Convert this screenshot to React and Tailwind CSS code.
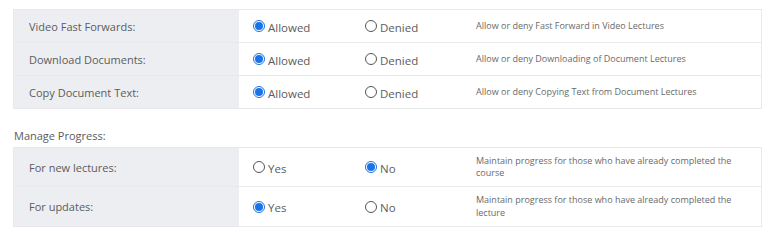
import React from "react";

const accessRows = [
  { label: "Video Fast Forwards:", value: "allowed", desc: "Allow or deny Fast Forward in Video Lectures" },
  { label: "Download Documents:", value: "allowed", desc: "Allow or deny Downloading of Document Lectures" },
  { label: "Copy Document Text:", value: "allowed", desc: "Allow or deny Copying Text from Document Lectures" },
];

const progressRows = [
  { label: "For new lectures:", value: "no", desc: "Maintain progress for those who have already completed the course" },
  { label: "For updates:", value: "yes", desc: "Maintain progress for those who have already completed the lecture" },
];

function Radio({ checked, label }) {
  return (
    <span className="flex items-center gap-[3px]">
      {checked ? (
        <span className="flex h-[12px] w-[12px] items-center justify-center rounded-full border border-[#1a73e8] bg-white">
          <span className="h-[8px] w-[8px] rounded-full bg-[#1a73e8]" />
        </span>
      ) : (
        <span className="h-[12px] w-[12px] rounded-full border border-[#555]" />
      )}
      <span className="mt-[2px] text-[11.5px] leading-[15px] text-[#5c5c5c]">{label}</span>
    </span>
  );
}

function SettingsTable({ rows, options, heights }) {
  return (
    <div className="ml-[13px] w-[749px] border-x border-t border-[#e8e9ed]">
      {rows.map((row, i) => (
        <div key={row.label} className={`flex border-b border-[#e8e9ed] ${heights[i]}`}>
          <div className="flex w-[225px] items-center bg-[#edeef2] pl-[15px] text-[11px] leading-[15px] text-[#5c5c5c]">
            {row.label}
          </div>
          <div className="flex w-[112px] items-center pl-[14px]">
            <Radio checked={row.value === options[0].value} label={options[0].label} />
          </div>
          <div className="flex w-[112px] items-center pl-[14px]">
            <Radio checked={row.value === options[1].value} label={options[1].label} />
          </div>
          <div className="flex flex-1 items-center pl-[13px] pr-[20px] text-[9px] leading-[12.5px] text-[#6a6a6a]">
            <span className="max-w-[270px]">{row.desc}</span>
          </div>
        </div>
      ))}
    </div>
  );
}

export default function App() {
  return (
    <div className="h-[236px] w-[768px] bg-white pt-[9px]" style={{ fontFamily: '"Open Sans", sans-serif' }}>
      <SettingsTable
        rows={accessRows}
        heights={["h-[33px]", "h-[33px]", "h-[33px]"]}
        options={[
          { value: "allowed", label: "Allowed" },
          { value: "denied", label: "Denied" },
        ]}
      />
      <div className="ml-[14px] mt-[19px] mb-[4px] text-[11px] leading-[15px] text-[#5c5c5c]">Manage Progress:</div>
      <SettingsTable
        rows={progressRows}
        heights={["h-[39px]", "h-[40px]"]}
        options={[
          { value: "yes", label: "Yes" },
          { value: "no", label: "No" },
        ]}
      />
    </div>
  );
}
